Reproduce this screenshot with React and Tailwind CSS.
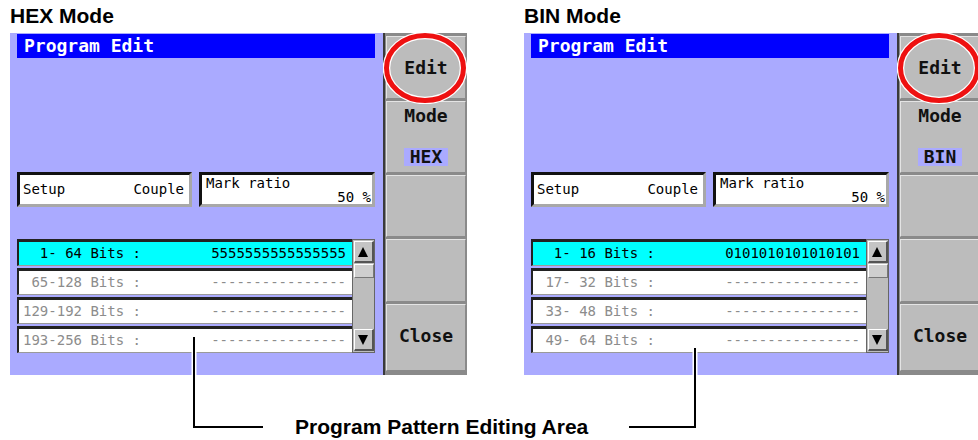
import React from 'react'

const HEX_ROWS = [
  { label: '  1- 64 Bits :', value: '5555555555555555', active: true },
  { label: ' 65-128 Bits :', value: '----------------' },
  { label: '129-192 Bits :', value: '----------------' },
  { label: '193-256 Bits :', value: '----------------' },
]

const BIN_ROWS = [
  { label: '  1- 16 Bits :', value: '0101010101010101', active: true },
  { label: ' 17- 32 Bits :', value: '----------------' },
  { label: ' 33- 48 Bits :', value: '----------------' },
  { label: ' 49- 64 Bits :', value: '----------------' },
]

const mono = "font-['DejaVu_Sans_Mono',monospace]"

function InsetBox({ className, children }) {
  return (
    <div className={`bg-white border-t-[3px] border-l-[3px] border-t-[#111] border-l-[#111] border-b-[3px] border-r-[3px] border-b-[#a8a8a8] border-r-[#a8a8a8] ${className}`}>
      {children}
    </div>
  )
}

function ScrollButton({ up }) {
  return (
    <div className="h-[22px] w-[20px] bg-[#c4c4c4] border-t border-l border-t-white border-l-white border-b-2 border-r-2 border-b-[#555] border-r-[#555] flex items-center justify-center">
      <svg width="10" height="10" viewBox="0 0 10 10">
        {up ? <polygon points="5,0 10,10 0,10" fill="#000" /> : <polygon points="0,0 10,0 5,10" fill="#000" />}
      </svg>
    </div>
  )
}

function SoftKey({ children, className = '' }) {
  return (
    <div className={`flex-1 bg-[#bcbcbc] border-t border-l border-t-[#e4e4e4] border-l-[#e4e4e4] border-b border-r border-b-[#8a8a8a] border-r-[#8a8a8a] flex flex-col items-center ${className}`}>
      {children}
    </div>
  )
}

function Panel({ title, mode, rows, className = '' }) {
  return (
    <div className={`shrink-0 ${className}`}>
      <div className="h-[33px] pt-[4px] text-[21px] leading-[24px] font-bold text-black font-['Liberation_Sans',Arial,sans-serif]">
        {title}
      </div>
      <div className="flex h-[342px]">
        {/* screen */}
        <div className={`w-[373px] bg-[#aaaaff] pl-[7px] pt-[1px] ${mono}`}>
          <div className="w-[358px] h-[24px] bg-[#0000ff] text-white font-bold text-[18px] leading-[24px] pl-[7px] whitespace-pre">
            Program Edit
          </div>

          <div className="flex gap-[7px] mt-[114px] text-[14px] text-black">
            <InsetBox className="w-[175px] h-[35px] flex items-center justify-between pl-[3px] pr-[5px]">
              <span>Setup</span>
              <span>Couple</span>
            </InsetBox>
            <InsetBox className="w-[176px] h-[35px] flex flex-col pl-[4px] pr-[1px] leading-[16px]">
              <span className="whitespace-pre">Mark ratio</span>
              <span className="self-end whitespace-pre mt-[-2px]">50 %</span>
            </InsetBox>
          </div>

          <div className="flex mt-[32px] w-[358px]">
            <div className="w-[335px] flex flex-col gap-[2px] text-[14px]">
              {rows.map((row, i) => (
                <div
                  key={i}
                  className={`h-[27px] flex items-center justify-between pl-[4px] pr-[6px] border-t-[3px] border-l-2 border-t-[#222] border-l-[#222] border-b border-b-[#9a9a9a] whitespace-pre ${
                    row.active ? 'bg-[#00ffff] text-black' : 'bg-white text-[#8c8c8c]'
                  }`}
                >
                  <span>{row.label}</span>
                  <span>{row.value}</span>
                </div>
              ))}
            </div>
            <div className="w-[23px] h-[114px] bg-[#bdbdbd] border border-[#666] flex flex-col items-center pt-[1px] pb-[1px]">
              <ScrollButton up />
              <div className="mt-[1px] h-[14px] w-[20px] bg-[#cfcfcf] border-t border-l border-t-white border-l-white border-b border-r border-b-[#777] border-r-[#777]" />
              <div className="flex-1" />
              <ScrollButton />
            </div>
          </div>
        </div>

        {/* soft keys */}
        <div className={`relative w-[84px] bg-[#8a8a8a] border-l-2 border-l-[#3a3a3a] pl-[1px] pr-[1px] pt-[3px] pb-[4px] flex flex-col gap-[2px] ${mono} font-bold text-[18px] text-[#111]`}>
          <SoftKey className="justify-center">Edit</SoftKey>
          <SoftKey className="justify-between pt-[3px] pb-[6px]">
            <span className="leading-[22px]">Mode</span>
            <span className="bg-[#aaaaff] w-[44px] h-[18px] leading-[18px] text-center">{mode}</span>
          </SoftKey>
          <SoftKey />
          <SoftKey />
          <SoftKey className="justify-center pb-[4px]">Close</SoftKey>
          <svg className="absolute left-[-2px] top-[-1px]" width="84" height="72" viewBox="0 0 84 72">
            <ellipse cx="42" cy="36" rx="38.5" ry="32.5" fill="none" stroke="#fff" strokeWidth="7.5" />
            <ellipse cx="42" cy="36" rx="38.5" ry="32.5" fill="none" stroke="#ee1111" strokeWidth="5" />
          </svg>
        </div>
      </div>
    </div>
  )
}

export default function App() {
  return (
    <div className="relative w-[978px] h-[440px] bg-white overflow-hidden">
      <div className="flex">
        <Panel title="HEX Mode" mode="HEX" rows={HEX_ROWS} className="ml-[10px] w-[459px]" />
        <Panel title="BIN Mode" mode="BIN" rows={BIN_ROWS} className="ml-[55px] w-[459px]" />
      </div>

      <div className="mt-[40px] ml-[295px] text-[21px] leading-[24px] font-bold text-black font-['Liberation_Sans',Arial,sans-serif]">
        Program Pattern Editing Area
      </div>

      {/* callout lines */}
      <svg className="absolute left-0 top-0 pointer-events-none" width="978" height="440">
        <polyline points="194,337 194,427 263,427" fill="none" stroke="#fff" strokeWidth="5" />
        <polyline points="194,337 194,427 263,427" fill="none" stroke="#000" strokeWidth="2" />
        <polyline points="629,427 695,427 695,348" fill="none" stroke="#fff" strokeWidth="5" />
        <polyline points="629,427 695,427 695,348" fill="none" stroke="#000" strokeWidth="2" />
      </svg>
    </div>
  )
}
